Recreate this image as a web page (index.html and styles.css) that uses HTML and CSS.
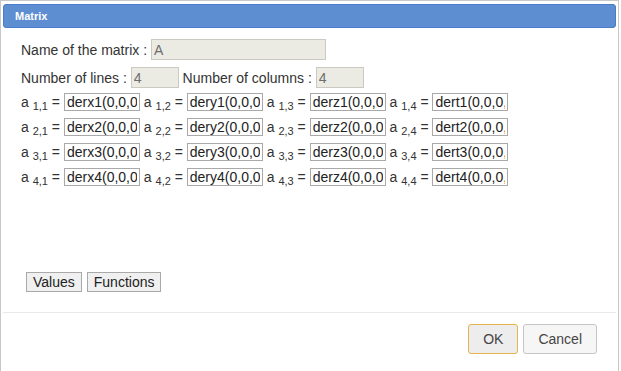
FILE: index.html
```html
<!DOCTYPE html>
<html>
<head>
<meta charset="utf-8">
<link rel="stylesheet" href="styles.css">
</head>
<body>
<div class="dialog">
  <div class="titlebar"><span class="title">Matrix</span></div>
  <div class="content">
    <div class="row name-row">
      <span class="lbl">Name of the matrix : </span><input class="dis name-in" value="A" disabled>
    </div>
    <div class="row size-row">
      <span class="lbl">Number of lines : </span><input class="dis num-in" value="4" disabled><span class="lbl"> Number of columns : </span><input class="dis num-in" value="4" disabled>
    </div>
    <div class="matrix">
      <div class="mrow">
        <span class="lbl">a <sub>1,1</sub> = </span><input class="cell" value="derx1(0,0,0)"><span class="lbl"> a <sub>1,2</sub> = </span><input class="cell" value="dery1(0,0,0)"><span class="lbl"> a <sub>1,3</sub> = </span><input class="cell" value="derz1(0,0,0)"><span class="lbl"> a <sub>1,4</sub> = </span><input class="cell" value="dert1(0,0,0,0)">
      </div>
      <div class="mrow">
        <span class="lbl">a <sub>2,1</sub> = </span><input class="cell" value="derx2(0,0,0)"><span class="lbl"> a <sub>2,2</sub> = </span><input class="cell" value="dery2(0,0,0)"><span class="lbl"> a <sub>2,3</sub> = </span><input class="cell" value="derz2(0,0,0)"><span class="lbl"> a <sub>2,4</sub> = </span><input class="cell" value="dert2(0,0,0,0)">
      </div>
      <div class="mrow">
        <span class="lbl">a <sub>3,1</sub> = </span><input class="cell" value="derx3(0,0,0)"><span class="lbl"> a <sub>3,2</sub> = </span><input class="cell" value="dery3(0,0,0)"><span class="lbl"> a <sub>3,3</sub> = </span><input class="cell" value="derz3(0,0,0)"><span class="lbl"> a <sub>3,4</sub> = </span><input class="cell" value="dert3(0,0,0,0)">
      </div>
      <div class="mrow">
        <span class="lbl">a <sub>4,1</sub> = </span><input class="cell" value="derx4(0,0,0)"><span class="lbl"> a <sub>4,2</sub> = </span><input class="cell" value="dery4(0,0,0)"><span class="lbl"> a <sub>4,3</sub> = </span><input class="cell" value="derz4(0,0,0)"><span class="lbl"> a <sub>4,4</sub> = </span><input class="cell" value="dert4(0,0,0,0)">
      </div>
    </div>
    <div class="tools">
      <button class="tbtn">Values</button><button class="tbtn">Functions</button>
    </div>
  </div>
  <div class="footer">
    <button class="dbtn ok">OK</button><button class="dbtn">Cancel</button>
  </div>
</div>
</body>
</html>
```
FILE: styles.css
```css
html, body {
  margin: 0;
  padding: 0;
  background: #ffffff;
  overflow: hidden;
}
body {
  font-family: "Liberation Sans", Arial, sans-serif;
  font-size: 14px;
  color: #333333;
}
.dialog {
  width: 619px;
  height: 371px;
  box-sizing: border-box;
  border: 1px solid #c8c8c8;
  border-bottom: none;
  padding: 3px 2px 0 2px;
  display: flex;
  flex-direction: column;
}
.titlebar {
  height: 24px;
  box-sizing: border-box;
  background: #5e8ed2;
  border: 1px solid #4b7ac6;
  border-radius: 3px;
  display: flex;
  align-items: center;
  padding-left: 11px;
}
.title {
  color: #ffffff;
  font-weight: bold;
  font-size: 11px;
}
.content {
  height: 285px;
  box-sizing: border-box;
  padding: 11px 0 20px 18px;
  display: flex;
  flex-direction: column;
  border-bottom: 1px solid #e9e9e9;
}
.row {
  display: flex;
  align-items: center;
  height: 21px;
}
.size-row {
  margin-top: 7px;
}
.lbl {
  white-space: pre;
}
input {
  font-family: "Liberation Sans", Arial, sans-serif;
  font-size: 14px;
  margin: 0;
  box-sizing: border-box;
  outline: none;
}
.dis {
  height: 21px;
  background: #ebebe4;
  border: 1px solid #cacac2;
  color: #6d6d6d;
  padding: 0 2px;
}
.name-in {
  width: 175px;
}
.num-in {
  width: 48px;
}
.matrix {
  margin-top: 5px;
  display: flex;
  flex-direction: column;
  gap: 7px;
}
.mrow {
  display: flex;
  align-items: center;
  height: 18px;
}
sub {
  font-size: 11px;
  vertical-align: -3px;
  line-height: 0;
}
.cell {
  width: 76px;
  height: 18px;
  border: 1px solid #a9a9a9;
  background: #ffffff;
  color: #222222;
  padding: 0 2px;
}
.tools {
  margin-top: auto;
  padding-left: 5px;
  display: flex;
  gap: 5px;
}
.tbtn {
  font-family: "Liberation Sans", Arial, sans-serif;
  font-size: 14px;
  color: #222222;
  height: 20px;
  padding: 0 6px;
  background: #f0f0f0;
  border: 1px solid #a9a9a9;
  border-radius: 0;
  margin: 0;
}
.footer {
  display: flex;
  justify-content: flex-end;
  gap: 5px;
  padding: 11px 19px 0 0;
}
.dbtn {
  font-family: "Liberation Sans", Arial, sans-serif;
  font-size: 14px;
  color: #454545;
  height: 30px;
  padding: 0 14px;
  background: #f6f6f6;
  border: 1px solid #c5c5c5;
  border-radius: 3px;
  margin: 0;
}
.dbtn.ok {
  background: #ededed;
  border-color: #e6b34d;
}
```
